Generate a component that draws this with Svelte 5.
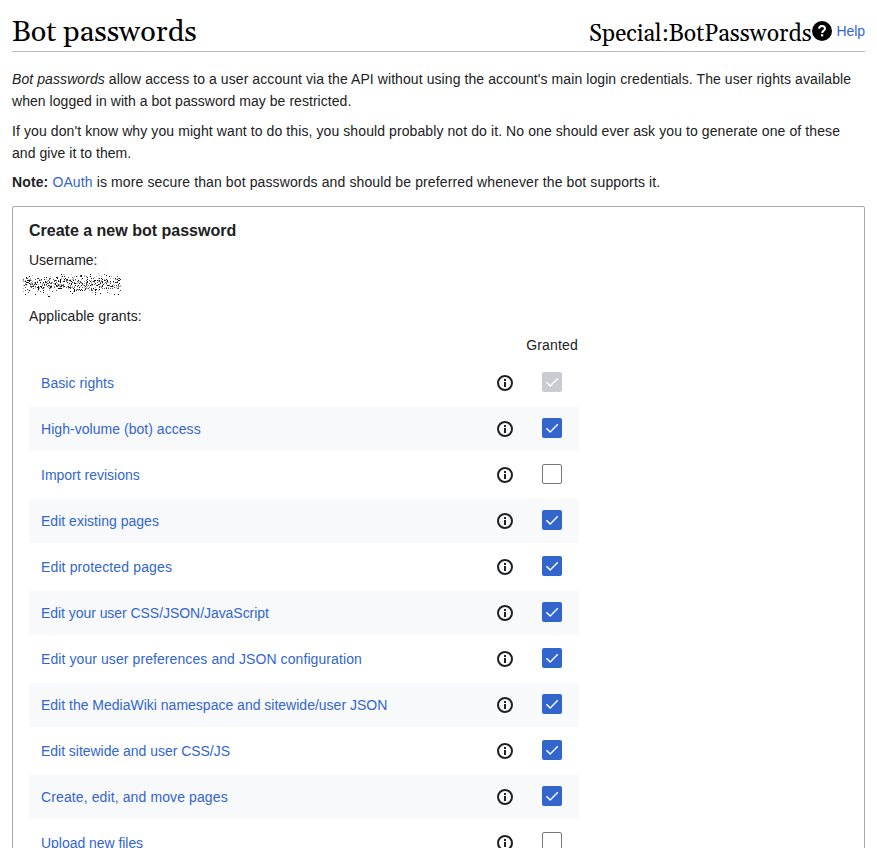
<script>
  const grants = [
    { name: 'Basic rights', state: 'locked', track: 0.06 },
    { name: 'High-volume (bot) access', state: 'on', track: 0.04 },
    { name: 'Import revisions', state: 'off', track: 0 },
    { name: 'Edit existing pages', state: 'on', track: 0.02 },
    { name: 'Edit protected pages', state: 'on', track: 0.13 },
    { name: 'Edit your user CSS/JSON/JavaScript', state: 'on', track: -0.05 },
    { name: 'Edit your user preferences and JSON configuration', state: 'on', track: 0.085 },
    { name: 'Edit the MediaWiki namespace and sitewide/user JSON', state: 'on', track: 0 },
    { name: 'Edit sitewide and user CSS/JS', state: 'on', track: -0.03 },
    { name: 'Create, edit, and move pages', state: 'on', track: 0.11 },
    { name: 'Upload new files', state: 'off', track: -0.04 }
  ];

  // Speckle that hides the user name: dense in the middle, sparse at the edges.
  function speckle() {
    let seed = 4711;
    const rnd = () => (seed = (seed * 16807) % 2147483647) / 2147483647;
    const shades = ['', '', ''];
    for (let y = 0; y < 24; y++) {
      const density = 0.45 * Math.exp(-(((y - 10.5) / 6.4) ** 2));
      for (let x = 0; x < 98; x++) {
        if (rnd() < density) shades[Math.floor(rnd() * 3)] += `M${x} ${y}h1v1h-1z`;
      }
    }
    return shades;
  }
  const shades = speckle();
</script>

<main>
  <header>
    <h1>Bot passwords</h1>
    <div class="tools">
      <span class="special">Special:BotPasswords</span>
      <svg class="help" width="20" height="20" viewBox="0 0 20 20" aria-hidden="true">
        <circle cx="10" cy="10" r="10" />
        <path d="M7.1 7.8C7.1 6 8.3 5 10 5s3 1 3 2.5c0 2.2-2.8 2.1-2.8 4.5" fill="none" stroke="#fff" stroke-width="2" />
        <path d="M9 13.2h2.2v2.2H9z" fill="#fff" />
      </svg>
      <a class="helplink" href="#help">Help</a>
    </div>
  </header>

  <section class="intro">
    <p><span class="l1"><i>Bot passwords</i> allow access to a user account via the API without using the account's main login credentials. The user rights available</span><br /><span class="l1b">when logged in with a bot password may be restricted.</span></p>
    <p><span class="l2">If you don't know why you might want to do this, you should probably not do it. No one should ever ask you to generate one of these</span><br /><span class="l1b">and give it to them.</span></p>
    <p class="note"><b>Note:</b> <a href="#oauth">OAuth</a> is more secure than bot passwords and should be preferred whenever the bot supports it.</p>
  </section>

  <form>
    <h2>Create a new bot password</h2>
    <div class="label">Username:</div>
    <svg class="noise" width="98" height="24" shape-rendering="crispEdges" aria-hidden="true">
      <path d={shades[0]} fill="#111" />
      <path d={shades[1]} fill="#555" />
      <path d={shades[2]} fill="#aaa" />
    </svg>
    <div class="label grants-label">Applicable grants:</div>
    <div class="grants">
      <div class="head">Granted</div>
      {#each grants as g}
        <div class="row">
          <a href="#grant" style:letter-spacing="{g.track}px">{g.name}</a>
          <svg class="info" width="16" height="16" viewBox="0 0 16 16" aria-hidden="true">
            <circle cx="8" cy="8" r="7" fill="none" stroke="#202122" stroke-width="2" />
            <path d="M7 4h2v2H7zM7 7h2v5H7z" fill="#202122" />
          </svg>
          <span class="box {g.state}" role="checkbox" aria-checked={g.state !== 'off'} aria-label={g.name} tabindex="0">
            {#if g.state !== 'off'}
              <svg width="20" height="20" viewBox="0 0 20 20" aria-hidden="true">
                <path d="M4.4 10.2 8.2 14 15.8 6.2" fill="none" stroke="#fff" stroke-width="1.4" />
              </svg>
            {/if}
          </span>
        </div>
      {/each}
    </div>
  </form>
</main>

<style>
  :global(body) { background: #fff; overflow: hidden; }
  main {
    box-sizing: border-box;
    height: 848px;
    overflow: hidden;
    padding: 0 12px;
    font: 14px/22px "Liberation Sans", Arial, sans-serif;
    color: #202122;
  }
  a { color: #36c; text-decoration: none; }
  header {
    display: flex;
    justify-content: space-between;
    box-sizing: border-box;
    height: 52px;
    border-bottom: 1px solid #bbbcbe;
  }
  h1, .special {
    font-family: Georgia, Gelasio, "Liberation Serif", serif;
    font-weight: 400;
    color: #000;
    white-space: nowrap;
  }
  h1 { margin: 0; padding-top: 15px; font-size: 28.8px; line-height: 36px; }
  .tools { display: flex; align-items: flex-start; }
  .special { padding-top: 21px; font-size: 23px; line-height: 28px; }
  .help { margin: 21px 5px 0 0; }
  .helplink { padding-top: 20px; letter-spacing: -0.1px; }
  .intro { padding-top: 16px; white-space: nowrap; }
  .l1 { letter-spacing: 0.082px; }
  .l1b { letter-spacing: 0.045px; }
  .l2 { letter-spacing: 0.092px; }
  .note { letter-spacing: 0.118px; }
  p { margin: 0 0 8px; }
  p:last-child { margin: -1px 0 0; }
  form {
    box-sizing: border-box;
    height: 700px;
    margin-top: 13px;
    border: 1px solid #a2a9b1;
    border-radius: 2px;
    padding: 13px 16px;
  }
  h2 { margin: 0; font-size: 16px; line-height: 22px; }
  .label { margin-top: 7px; }
  .noise { display: block; margin: 2px 0 0 -6px; }
  .grants-label { margin-top: 8px; letter-spacing: 0.08px; }
  .grants { width: 550px; }
  .head { margin-top: 7px; padding-right: 1px; text-align: right; letter-spacing: 0.18px; }
  .row {
    display: flex;
    align-items: center;
    box-sizing: border-box;
    height: 44px;
    margin-bottom: 2px;
    padding: 0 17px 0 12px;
  }
  .head + .row { margin-top: 5px; }
  .row:nth-child(odd) { background: #f8f9fa; }
  .row a { flex: 1; }
  .info { margin-right: 29px; }
  .box { box-sizing: border-box; width: 20px; height: 20px; margin-bottom: 2px; border-radius: 2px; }
  .box svg { display: block; }
  .on { background: #36c; }
  .locked { background: #c8ccd1; }
  .off { border: 1px solid #72777d; background: #fff; }
</style>
